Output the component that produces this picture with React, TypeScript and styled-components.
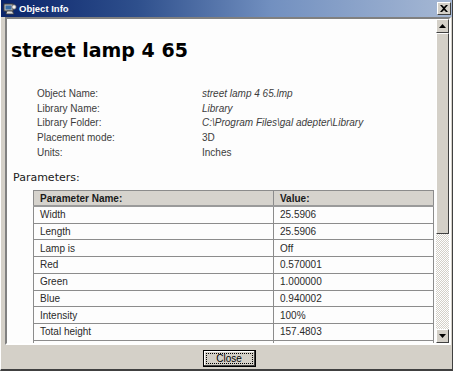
import React from "react";
import styled, { createGlobalStyle } from "styled-components";

const GlobalStyle = createGlobalStyle`
  html, body {
    margin: 0;
    padding: 0;
    overflow: hidden;
    background: #d4d0c8;
  }
`;

interface Param {
  name: string;
  value: string;
}

const info: { label: string; value: string; italic?: boolean }[] = [
  { label: "Object Name:", value: "street lamp 4 65.lmp", italic: true },
  { label: "Library Name:", value: "Library", italic: true },
  { label: "Library Folder:", value: "C:\\Program Files\\gal adepter\\Library", italic: true },
  { label: "Placement mode:", value: "3D" },
  { label: "Units:", value: "Inches" },
];

// the last row is only partly visible below the fold
const params: Param[] = [
  { name: "Width", value: "25.5906" },
  { name: "Length", value: "25.5906" },
  { name: "Lamp is", value: "Off" },
  { name: "Red", value: "0.570001" },
  { name: "Green", value: "1.000000" },
  { name: "Blue", value: "0.940002" },
  { name: "Intensity", value: "100%" },
  { name: "Total height", value: "157.4803" },
  { name: "", value: "" },
];

const App: React.FC = () => {
  return (
    <>
      <GlobalStyle />
      <Window>
        <TitleBar>
          <TitleIcon viewBox="0 0 14 14">
            <rect x="1" y="2" width="9" height="7" fill="#c0c0c0" stroke="#404040" strokeWidth="1" />
            <rect x="2.5" y="3.5" width="6" height="4" fill="#3a6ea5" />
            <path d="M4 9 L3 12 L11 12 L9 9 Z" fill="#e0e0e0" stroke="#404040" strokeWidth="0.8" />
            <circle cx="11" cy="5" r="2.2" fill="#f4f4f4" stroke="#606060" strokeWidth="0.8" />
          </TitleIcon>
          <TitleText>Object Info</TitleText>
          <CloseBox>
            <svg width="8" height="7" viewBox="0 0 8 7">
              <path d="M0 0 L2 0 L4 2 L6 0 L8 0 L5 3.5 L8 7 L6 7 L4 5 L2 7 L0 7 L3 3.5 Z" fill="#000" />
            </svg>
          </CloseBox>
        </TitleBar>

        <Panel>
          <ScrollArea>
            <Heading>street lamp 4 65</Heading>
            <InfoGrid>
              {info.map((row) => (
                <React.Fragment key={row.label}>
                  <InfoLabel>{row.label}</InfoLabel>
                  <InfoValue $italic={row.italic}>{row.value}</InfoValue>
                </React.Fragment>
              ))}
            </InfoGrid>
            <SectionTitle>Parameters:</SectionTitle>
            <ParamTable>
              <thead>
                <tr>
                  <HeadCell $first>Parameter Name:</HeadCell>
                  <HeadCell>Value:</HeadCell>
                </tr>
              </thead>
              <tbody>
                {params.map((p, i) => (
                  <tr key={i}>
                    <Cell>{p.name}</Cell>
                    <Cell>{p.value}</Cell>
                  </tr>
                ))}
              </tbody>
            </ParamTable>
          </ScrollArea>

          <ScrollBar>
            <ArrowButton>
              <svg width="7" height="4" viewBox="0 0 7 4">
                <path d="M3.5 0 L7 4 L0 4 Z" fill="#000" />
              </svg>
            </ArrowButton>
            <Thumb />
            <Track />
            <ArrowButton>
              <svg width="7" height="4" viewBox="0 0 7 4">
                <path d="M0 0 L7 0 L3.5 4 Z" fill="#000" />
              </svg>
            </ArrowButton>
          </ScrollBar>
        </Panel>

        <Footer>
          <CloseButton>
            <FocusRing>Close</FocusRing>
          </CloseButton>
        </Footer>
      </Window>
    </>
  );
};

export default App;

const Window = styled.div`
  width: 453px;
  height: 371px;
  box-sizing: border-box;
  display: flex;
  flex-direction: column;
  background: #d4d0c8;
  border-bottom: 2px solid #404040;
  border-right: 1px solid #404040;
  border-left: 1px solid #ffffff;
  font-family: "Liberation Sans", Arial, sans-serif;
`;

const TitleBar = styled.div`
  height: 17px;
  flex: none;
  display: flex;
  align-items: center;
  padding: 0 1px 0 2px;
  background: linear-gradient(90deg, #0a246a 0%, #2e4f8c 30%, #7290c0 60%, #a6b8d4 100%);
`;

const TitleIcon = styled.svg`
  width: 14px;
  height: 14px;
  flex: none;
`;

const TitleText = styled.span`
  margin-left: 2px;
  flex: 1;
  color: #ffffff;
  font-weight: bold;
  font-size: 9.5px;
`;

const CloseBox = styled.div`
  width: 14px;
  height: 13px;
  box-sizing: border-box;
  display: flex;
  align-items: center;
  justify-content: center;
  background: #d4d0c8;
  border-top: 1px solid #ffffff;
  border-left: 1px solid #ffffff;
  border-right: 1px solid #404040;
  border-bottom: 1px solid #404040;
`;

const Panel = styled.div`
  height: 328px;
  flex: none;
  display: flex;
  margin: 0 1px 0 4px;
  box-sizing: border-box;
  border-top: 2px solid #808080;
  border-left: 2px solid #808080;
  border-right: 2px solid #ffffff;
  border-bottom: 2px solid #ffffff;
  background: #fdfdfd;
`;

const ScrollArea = styled.div`
  flex: 1;
  overflow: hidden;
  padding-left: 4px;
`;

const Heading = styled.h1`
  margin: 20px 0 0 0;
  font-family: "DejaVu Sans", Verdana, sans-serif;
  font-weight: bold;
  font-size: 19px;
  line-height: 22px;
  color: #000000;
`;

const InfoGrid = styled.div`
  display: grid;
  grid-template-columns: 165px 1fr;
  grid-auto-rows: 14.75px;
  margin: 25px 0 0 26px;
  font-size: 10px;
  align-items: center;
`;

const InfoLabel = styled.div`
  color: #3c3c3c;
`;

const InfoValue = styled.div<{ $italic?: boolean }>`
  color: #3c3c3c;
  font-style: ${(p) => (p.$italic ? "italic" : "normal")};
  white-space: nowrap;
`;

const SectionTitle = styled.div`
  margin: 10px 0 0 2px;
  font-family: "DejaVu Sans", Verdana, sans-serif;
  font-size: 11px;
  line-height: 16px;
  color: #202020;
`;

const ParamTable = styled.table`
  margin: 4px 0 0 22px;
  width: 401px;
  border-collapse: collapse;
  border: 1px solid #8c8c8c;
  font-size: 10px;
  color: #2a2a2a;
`;

const HeadCell = styled.th<{ $first?: boolean }>`
  width: ${(p) => (p.$first ? "240px" : "auto")};
  height: 16px;
  padding: 0 0 0 6px;
  box-sizing: border-box;
  text-align: left;
  font-weight: bold;
  background: #d6d3cd;
  border: 1px solid #8c8c8c;
  border-bottom: 2px solid #9a9a9a;
  color: #1a1a1a;
`;

const Cell = styled.td`
  height: 16.75px;
  padding: 0 0 0 6px;
  box-sizing: border-box;
  border: 1px solid #8c8c8c;
  white-space: nowrap;
`;

const ScrollBar = styled.div`
  width: 13px;
  flex: none;
  display: flex;
  flex-direction: column;
`;

const ArrowButton = styled.div`
  height: 14px;
  flex: none;
  box-sizing: border-box;
  display: flex;
  align-items: center;
  justify-content: center;
  background: #d4d0c8;
  border-top: 1px solid #ffffff;
  border-left: 1px solid #ffffff;
  border-right: 1px solid #404040;
  border-bottom: 1px solid #404040;
`;

const Thumb = styled.div`
  height: 201px;
  flex: none;
  box-sizing: border-box;
  background: #d4d0c8;
  border-top: 1px solid #ffffff;
  border-left: 1px solid #ffffff;
  border-right: 1px solid #404040;
  border-bottom: 1px solid #404040;
`;

const Track = styled.div`
  flex: 1;
  background: repeating-conic-gradient(#d4d0c8 0 25%, #ffffff 0 50%) 0 0 / 2px 2px;
`;

const Footer = styled.div`
  flex: 1;
  display: flex;
  justify-content: center;
  align-items: flex-start;
  padding-top: 5px;
  padding-left: 5px;
`;

const CloseButton = styled.button`
  width: 53px;
  height: 17px;
  padding: 0;
  box-sizing: border-box;
  display: flex;
  background: #d4d0c8;
  border: 1px solid #000000;
  box-shadow: inset -1px -1px 0 #404040, inset 1px 1px 0 #ffffff;
  font-family: "Liberation Sans", Arial, sans-serif;
  font-size: 10px;
  line-height: 9px;
  color: #000000;
`;

const FocusRing = styled.span`
  flex: 1;
  display: flex;
  align-items: center;
  justify-content: center;
  border: 1px dotted #000000;
  margin: 2px;
`;
